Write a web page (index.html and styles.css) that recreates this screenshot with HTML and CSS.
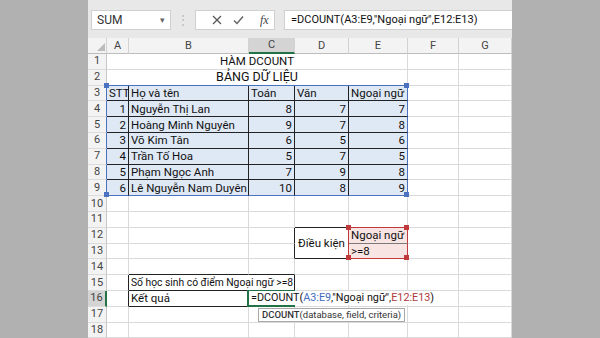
FILE: index.html
```html
<!DOCTYPE html>
<html lang="vi">
<head>
  <meta charset="UTF-8" />
  <title>Hàm DCOUNT</title>
  <link rel="stylesheet" href="styles.css">
</head>
<body>
  <div class="screen">
    <div class="excel">

      <div class="formula-bar">
        <div class="name-box"><span>SUM</span><span class="caret">▾</span></div>
        <div class="grip">⋮</div>
        <div class="fx-buttons">
          <svg width="10" height="10" viewBox="0 0 10 10"><path d="M1 1L9 9M9 1L1 9" stroke="#555" stroke-width="1.2" fill="none"/></svg>
          <svg width="11" height="10" viewBox="0 0 11 10"><path d="M1 5.5L4 8.5L10 1.5" stroke="#666" stroke-width="1.5" fill="none"/></svg>
          <span class="fx">fx</span>
        </div>
        <div class="formula-input">=DCOUNT(A3:E9,"Ngoại ngữ",E12:E13)</div>
      </div>

      <table class="sheet">
        <colgroup>
          <col style="width:19px"><col style="width:22px"><col style="width:120px"><col style="width:46px">
          <col style="width:54px"><col style="width:59px"><col style="width:51px"><col style="width:53px">
        </colgroup>
        <tr class="head">
          <th class="ch corner"><span class="tri"></span></th>
          <th class="ch">A</th><th class="ch">B</th><th class="ch sel">C</th><th class="ch">D</th>
          <th class="ch">E</th><th class="ch">F</th><th class="ch">G</th>
        </tr>
        <tr>
          <th class="rh">1</th>
          <td colspan="5" class="center">HÀM DCOUNT</td>
          <td></td><td></td>
        </tr>
        <tr>
          <th class="rh">2</th>
          <td colspan="5" class="center big eb">BẢNG DỮ LIỆU</td>
          <td></td><td></td>
        </tr>
        <tr>
          <th class="rh edge">3</th>
          <td class="t"><span class="h blue tl"></span>STT</td>
          <td class="t">Họ và tên</td>
          <td class="t">Toán</td>
          <td class="t">Văn</td>
          <td class="t er">Ngoại ngữ<span class="h blue tr"></span></td>
          <td></td><td></td>
        </tr>
        <tr>
          <th class="rh edge">4</th>
          <td class="t n">1</td><td class="t">Nguyễn Thị Lan</td><td class="t n">8</td><td class="t n">7</td><td class="t n er">7</td>
          <td></td><td></td>
        </tr>
        <tr>
          <th class="rh edge">5</th>
          <td class="t n">2</td><td class="t">Hoàng Minh Nguyên</td><td class="t n">9</td><td class="t n">7</td><td class="t n er">8</td>
          <td></td><td></td>
        </tr>
        <tr>
          <th class="rh edge">6</th>
          <td class="t n">3</td><td class="t">Võ Kim Tân</td><td class="t n">6</td><td class="t n">5</td><td class="t n er">6</td>
          <td></td><td></td>
        </tr>
        <tr>
          <th class="rh edge">7</th>
          <td class="t n">4</td><td class="t">Trần Tố Hoa</td><td class="t n">5</td><td class="t n">7</td><td class="t n er">5</td>
          <td></td><td></td>
        </tr>
        <tr>
          <th class="rh edge">8</th>
          <td class="t n">5</td><td class="t">Phạm Ngọc Anh</td><td class="t n">7</td><td class="t n">9</td><td class="t n er">8</td>
          <td></td><td></td>
        </tr>
        <tr>
          <th class="rh edge">9</th>
          <td class="t n eb"><span class="h blue bl"></span>6</td><td class="t eb">Lê Nguyễn Nam Duyên</td><td class="t n eb">10</td><td class="t n eb">8</td><td class="t n er eb">9<span class="h blue br"></span></td>
          <td></td><td></td>
        </tr>
        <tr>
          <th class="rh">10</th>
          <td></td><td></td><td></td><td></td><td></td><td></td><td></td>
        </tr>
        <tr>
          <th class="rh">11</th>
          <td></td><td></td><td></td><td class="bb"></td><td class="rb"></td><td></td><td></td>
        </tr>
        <tr>
          <th class="rh">12</th>
          <td></td><td></td><td class="br"></td>
          <td rowspan="2" class="center box-d">Điều kiện</td>
          <td class="crit sep"><span class="h red tl"></span>Ngoại ngữ<span class="h red tr"></span></td>
          <td></td><td></td>
        </tr>
        <tr>
          <th class="rh">13</th>
          <td></td><td></td><td class="br"></td>
          <td class="crit rbot"><span class="h red bl"></span>&gt;=8<span class="h red br"></span></td>
          <td></td><td></td>
        </tr>
        <tr>
          <th class="rh">14</th>
          <td></td><td class="bb"></td><td class="bb"></td><td></td><td></td><td></td><td></td>
        </tr>
        <tr>
          <th class="rh">15</th>
          <td class="br"></td>
          <td colspan="2" class="boxed clip">Số học sinh có điểm Ngoại ngữ &gt;=8</td>
          <td></td><td></td><td></td><td></td>
        </tr>
        <tr>
          <th class="rh sel-row">16</th>
          <td class="br"></td>
          <td class="boxed">Kết quả</td>
          <td class="active">
            <span class="cursor-box"></span>
            <span class="edit">=DCOUNT(<span class="ref-blue">A3:E9</span>,"Ngoại ngữ",<span class="ref-red">E12:E13</span>)</span>
            <span class="tip"><b>DCOUNT</b>(database, field, criteria)</span>
          </td>
          <td></td><td></td><td></td><td></td>
        </tr>
        <tr>
          <th class="rh">17</th>
          <td></td><td></td><td></td><td></td><td></td><td></td><td></td>
        </tr>
        <tr>
          <th class="rh">18</th>
          <td></td><td></td><td></td><td></td><td></td><td></td><td></td>
        </tr>
      </table>

    </div>
  </div>
</body>
</html>
```

FILE: styles.css
```css
body {
  margin: 0;
  background: #b1b1b1;
  font-family: Roboto, 'Noto Sans', sans-serif;
  color: #111;
}

.screen {
  display: flex;
  justify-content: center;
  height: 338px;
  overflow: hidden;
}

.excel {
  width: 424px;
  background: #fff;
}

/* formula bar */
.formula-bar {
  height: 38px;
  box-sizing: border-box;
  padding-top: 10px;
  background: #e8e8e8;
  display: flex;
  align-items: flex-start;
}

.name-box {
  margin-left: 3px;
  width: 80px;
  height: 20px;
  box-sizing: border-box;
  padding: 0 5px;
  background: #fff;
  border: 1px solid #d0d0d0;
  display: flex;
  align-items: center;
  justify-content: space-between;
  font-size: 12px;
  color: #333;
}

.caret {
  font-size: 9px;
  color: #666;
}

.grip {
  width: 24px;
  text-align: center;
  color: #bbb;
  font-size: 12px;
  line-height: 20px;
}

.fx-buttons {
  width: 80px;
  height: 20px;
  box-sizing: border-box;
  padding-left: 16px;
  background: #fff;
  border: 1px solid #d0d0d0;
  display: flex;
  align-items: center;
  gap: 11px;
}

.fx {
  margin-left: 5px;
  font-family: 'Liberation Serif', serif;
  font-style: italic;
  font-size: 12px;
  color: #444;
}

.formula-input {
  margin-left: 9px;
  flex: 1;
  height: 20px;
  box-sizing: border-box;
  padding-left: 6px;
  background: #fff;
  border: 1px solid #d0d0d0;
  border-right: none;
  font-size: 11px;
  line-height: 18px;
  white-space: nowrap;
}

/* sheet */
.sheet {
  border-collapse: separate;
  border-spacing: 0;
  table-layout: fixed;
  width: 424px;
  font-size: 11.5px;
}

.sheet tr {
  height: 15.8px;
}

.sheet tr.head {
  height: 14px;
}

.sheet td,
.sheet th {
  padding: 0 2px;
  line-height: 14px;
  white-space: nowrap;
  border-right: 1px solid #dadada;
  border-bottom: 1px solid #dadada;
  text-align: left;
  position: relative;
}

.ch {
  background: #f3f3f3;
  color: #444;
  font-weight: normal;
  font-size: 11px;
  text-align: center !important;
  border-right-color: #d2d2d2 !important;
  border-bottom-color: #bdbdbd !important;
}

.ch.sel {
  background: #d4d4d4;
  border-bottom: 2px solid #217346 !important;
}

.tri {
  position: absolute;
  right: 1px;
  bottom: 2px;
  width: 0;
  height: 0;
  border-left: 8px solid transparent;
  border-bottom: 8px solid #bcbcbc;
}

.rh {
  background: #f3f3f3;
  color: #444;
  font-weight: normal;
  font-size: 11px;
  text-align: center !important;
  border-right-color: #c6c6c6 !important;
  border-bottom-color: #dcdcdc !important;
}

.rh.edge {
  border-right-color: #4a72c0 !important;
}

.rh.sel-row {
  background: #d4d4d4;
  border-right: 2px solid #217346 !important;
}

.center {
  text-align: center !important;
}

.big {
  font-size: 12.5px;
}

/* data table A3:E9 */
.t {
  background: #dfe8f5;
  border-right-color: #222 !important;
  border-bottom-color: #222 !important;
}

.n {
  text-align: right !important;
}

.er {
  border-right-color: #4a72c0 !important;
}

.eb {
  border-bottom-color: #4a72c0 !important;
}

.h {
  position: absolute;
  width: 5px;
  height: 5px;
  z-index: 2;
}

.h.blue { background: #4a72c0; }
.h.red { background: #c0393b; }
.h.tl { left: -3px; top: -3px; }
.h.tr { right: -2px; top: -3px; }
.h.bl { left: -3px; bottom: -2px; }
.h.br { right: -2px; bottom: -2px; }

/* criteria */
.bb { border-bottom-color: #222 !important; }
.br { border-right-color: #222 !important; }
.rb { border-bottom-color: #c0393b !important; }

.box-d {
  border-right-color: #c0393b !important;
  border-bottom-color: #222 !important;
}

.crit {
  background: #f9e4e4;
  border-right-color: #c0393b !important;
}

.crit.sep {
  border-bottom-color: #7a7a7a !important;
}

.crit.rbot {
  border-bottom-color: #c0393b !important;
}

.boxed {
  border-right-color: #222 !important;
  border-bottom-color: #222 !important;
}

.clip {
  overflow: hidden;
  font-size: 10.3px;
}

/* editing cell */
.cursor-box {
  position: absolute;
  left: -2px;
  top: -1px;
  right: -1px;
  bottom: -1px;
  border: 2px solid #217346;
}

.edit {
  position: absolute;
  left: 0;
  top: 0;
  height: 14px;
  padding: 0 3px 0 2px;
  background: #fff;
  font-size: 10.8px;
  line-height: 14px;
  z-index: 3;
}

.ref-blue { color: #3f6bbf; }
.ref-red { color: #b03a3c; }

.tip {
  position: absolute;
  left: 9px;
  top: 17px;
  padding: 0 3px;
  background: #fff;
  border: 1px solid #a8a8a8;
  font-size: 9.5px;
  line-height: 12px;
  color: #333;
  z-index: 4;
}

.tip b {
  font-weight: 500;
}
```
